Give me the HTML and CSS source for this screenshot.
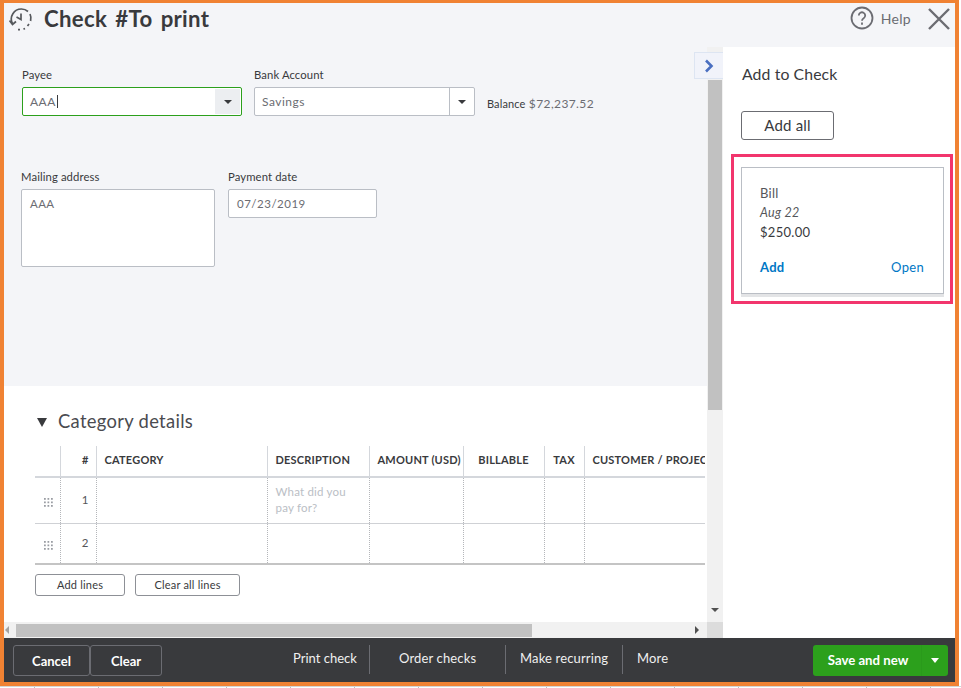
FILE: index.html
```html
<!DOCTYPE html>
<html lang="en">
<head>
<meta charset="utf-8">
<title>Check #To print</title>
<link rel="stylesheet" href="styles.css">
</head>
<body>
<div class="frame">
  <header class="header">
    <svg class="history" viewBox="0 0 24 24" width="24" height="24" fill="none" stroke="#55585c" stroke-width="1.7">
      <path d="M3.4 16.5A10 10 0 0 1 12.5 2a10 10 0 0 1 6.5 2.5"/>
      <path d="M21 7a10 10 0 0 1 .6 7M20 17l-1.5 2M16 21.5l-1.5.6M11 22.7H9"/>
      <path d="M12 6.5V12.500L7.500 10"/>
      <path d="M0.500 13.500L3.500 17.500L7 14.500"/>
    </svg>
    <h1 class="title">Check #To print</h1>
    <div class="help">
      <svg viewBox="0 0 24 24" width="24" height="24" fill="none" stroke="#6b6c72" stroke-width="1.8">
        <circle cx="12" cy="12" r="10.500"/>
        <path d="M8.800 9.500a3.200 3.200 0 1 1 4.900 2.700c-1.100.7-1.700 1.300-1.700 2.600"/>
        <path d="M12 16.600v2.200"/>
      </svg>
      <span>Help</span>
    </div>
    <svg class="close" viewBox="0 0 22 22" width="22" height="22" fill="none" stroke="#6b6c72" stroke-width="2.400">
      <path d="M1 1L21 21M21 1L1 21"/>
    </svg>
  </header>
  <main class="body">
    <section class="pane">
      <div class="content">
        <div class="form">
          <div class="row row-top">
            <div class="field">
              <label class="label">Payee</label>
              <div class="combo combo-active combo-payee">
                <span class="value">AAA<i class="caret"></i></span>
                <span class="arrow arrow-shaded"><b class="tri"></b></span>
              </div>
            </div>
            <div class="field field-bank">
              <label class="label">Bank Account</label>
              <div class="combo combo-bank">
                <span class="value">Savings</span>
                <span class="arrow arrow-line"><b class="tri"></b></span>
              </div>
            </div>
            <div class="balance"><span class="balance-label">Balance</span> $72,237.52</div>
          </div>
          <div class="row row-second">
            <div class="field">
              <label class="label">Mailing address</label>
              <div class="address">AAA</div>
            </div>
            <div class="field field-date">
              <label class="label">Payment date</label>
              <div class="date">07/23/2019</div>
            </div>
          </div>
        </div>
        <div class="details">
          <h2 class="section"><b class="section-tri"></b>Category details</h2>
          <table class="grid">
            <colgroup>
              <col class="c-drag"><col class="c-num"><col class="c-cat"><col class="c-desc"><col class="c-amt"><col class="c-bill"><col class="c-tax"><col class="c-cust">
            </colgroup>
            <thead>
              <tr>
                <th></th><th class="num">#</th><th>CATEGORY</th><th>DESCRIPTION</th><th>AMOUNT (USD)</th><th class="center">BILLABLE</th><th class="center">TAX</th><th>CUSTOMER / PROJECT</th>
              </tr>
            </thead>
            <tbody>
              <tr class="r1">
                <td class="drag"><span class="dots"></span></td><td class="num">1</td><td></td><td class="hint">What did you pay for?</td><td></td><td></td><td></td><td></td>
              </tr>
              <tr class="r2">
                <td class="drag"><span class="dots"></span></td><td class="num">2</td><td></td><td></td><td></td><td></td><td></td><td></td>
              </tr>
            </tbody>
          </table>
          <div class="table-actions">
            <button class="btn btn-lines">Add lines</button>
            <button class="btn btn-clear">Clear all lines</button>
          </div>
        </div>
      </div>
      <div class="vscroll">
        <span class="v-thumb"></span>
        <b class="v-down"></b>
      </div>
      <div class="hscroll">
        <b class="h-left"></b>
        <span class="h-thumb"></span>
        <b class="h-right"></b>
      </div>
      <div class="corner"></div>
      <button class="toggle" aria-label="Collapse">
        <svg viewBox="0 0 10 14" width="10" height="14" fill="none" stroke="#4a6fc0" stroke-width="2.600"><path d="M2 1.500L7.500 7L2 12.500"/></svg>
      </button>
    </section>
    <aside class="side">
      <h2 class="side-title">Add to Check</h2>
      <button class="btn btn-all">Add all</button>
      <div class="highlight">
        <div class="card">
          <div class="card-type">Bill</div>
          <div class="card-date">Aug 22</div>
          <div class="card-amt">$250.00</div>
          <div class="card-links"><a class="add">Add</a><a class="open">Open</a></div>
        </div>
      </div>
    </aside>
  </main>
  <footer class="footer">
    <div class="foot-left">
      <button class="dark">Cancel</button><button class="dark dark-clear">Clear</button>
    </div>
    <nav class="foot-mid">
      <a class="fl fl-print">Print check</a>
      <a class="fl fl-order">Order checks</a>
      <a class="fl fl-rec">Make recurring</a>
      <a class="fl fl-more">More</a>
    </nav>
    <div class="save">
      <span class="save-main">Save and new</span>
      <span class="save-arrow"><b class="tri tri-white"></b></span>
    </div>
  </footer>
</div>
</body>
</html>
```
FILE: styles.css
```css
* { box-sizing: border-box; }
html, body { margin: 0; padding: 0; }
body {
  width: 961px;
  height: 688px;
  overflow: hidden;
  font-family: "Lato", "Open Sans", sans-serif;
  color: #393a3d;
  background-color: #fff;
  background-image:
    linear-gradient(#d4d4d4, #d4d4d4),
    repeating-linear-gradient(90deg, transparent 0 34px, #bdbdbd 34px 35px, transparent 35px 64px);
  background-size: 100% 1px, 100% 2px;
  background-position: 0 686px, 0 686px;
  background-repeat: no-repeat;
}
button { font-family: inherit; cursor: pointer; }
h1, h2 { margin: 0; font-weight: normal; }

.frame {
  width: 959px;
  height: 686px;
  border-style: solid;
  border-color: #f08233;
  border-width: 3px 4px 4px 4px;
  display: flex;
  flex-direction: column;
  background: #f4f5f8;
}

.header {
  height: 44px;
  flex: none;
  display: flex;
  align-items: flex-start;
  padding: 5px 5px 0 5px;
}
.history { flex: none; margin-top: -1px; }
.title {
  margin: -2px 0 0 11px;
  font-size: 22.200px;
  line-height: 26px;
  font-weight: 700;
  color: #393a3d;
  letter-spacing: 0.3px;
  word-spacing: 2.500px;
}
.help {
  margin: -2px 0 0 auto;
  display: flex;
  align-items: center;
  gap: 7px;
  font-size: 14px;
  color: #6b6c72;
  letter-spacing: 0.3px;
}
.close { margin: 0 0 0 17px; flex: none; }

.body { flex: 1; min-height: 0; display: flex; }

.pane {
  position: relative;
  width: 719px;
  flex: none;
  display: grid;
  grid-template-columns: 703px 16px;
  grid-template-rows: 575px 16px;
}
.content { overflow: hidden; background: #fff; }

.form { height: 339px; background: #f4f5f8; padding: 21px 0 0 18px; }
.row { display: flex; }
.row-second { margin: 54px 0 0 -1px; }
.field { display: flex; flex-direction: column; }
.field-bank { margin-left: 12px; }
.field-date { margin-left: 13px; }
.label {
  font-size: 11.300px;
  line-height: 14px;
  color: #393a3d;
  margin-bottom: 5px;
  letter-spacing: 0.1px;
}
.combo {
  height: 29px;
  background: #fff;
  border: 1px solid #babec5;
  border-radius: 2px;
  display: flex;
  align-items: center;
  font-size: 12px;
  color: #6b6c72;
  letter-spacing: 0.5px;
}
.combo-payee { width: 220px; }
.combo-bank { width: 221px; }
.combo-active { border-color: #2ca01c; }
.value { flex: 1; padding: 0 0 1px 7px; display: flex; align-items: center; }
.caret { display: inline-block; width: 1px; height: 13px; background: #393a3d; margin-left: 1px; }
.arrow { width: 25px; height: 100%; display: flex; align-items: center; justify-content: center; }
.arrow-shaded { background: #eceef1; height: 25px; margin-right: 1px; }
.arrow-line { border-left: 1px solid #babec5; }
.tri { display: block; width: 0; height: 0; border-style: solid; border-width: 4px 4px 0 4px; border-color: #393a3d transparent transparent; }
.balance {
  margin: 28px 0 0 12px;
  font-size: 12px;
  line-height: 16px;
  color: #6b6c72;
  letter-spacing: 0.4px;
}
.balance-label { font-size: 11px; color: #393a3d; letter-spacing: 0.1px; }
.address {
  width: 194px;
  height: 78px;
  background: #fff;
  border: 1px solid #babec5;
  border-radius: 2px;
  padding: 6px 8px;
  font-size: 11.500px;
  line-height: 16px;
  color: #6b6c72;
  letter-spacing: 0.4px;
}
.date {
  width: 149px;
  height: 29px;
  background: #fff;
  border: 1px solid #babec5;
  border-radius: 2px;
  padding: 0 8px;
  font-size: 11.500px;
  line-height: 27px;
  color: #6b6c72;
  letter-spacing: 0.5px;
}

.details { width: 701px; overflow: hidden; padding: 23px 0 0 31px; background: #fff; }
.section {
  display: flex;
  align-items: center;
  font-size: 18.400px;
  line-height: 24px;
  color: #4a4b50;
  letter-spacing: 0.3px;
}
.section-tri {
  width: 0; height: 0;
  margin: 2px 11px 0 2px;
  border-style: solid;
  border-width: 9px 5px 0 5px;
  border-color: #393a3d transparent transparent;
}
.grid {
  margin-top: 13px;
  width: 750px;
  table-layout: fixed;
  border-collapse: collapse;
}
.c-drag { width: 25px; }
.c-num { width: 36px; }
.c-cat { width: 171px; }
.c-desc { width: 102px; }
.c-amt { width: 94px; }
.c-bill { width: 81px; }
.c-tax { width: 40px; }
.c-cust { width: 201px; }
.grid th {
  height: 31px;
  padding: 0 0 4px 8px;
  text-align: left;
  font-size: 11px;
  font-weight: 700;
  color: #393a3d;
  white-space: nowrap;
  overflow: hidden;
  letter-spacing: 0.2px;
  border-left: 1px solid #d4d7dc;
  border-bottom: 2px solid #d4d7dc;
}
.grid th:first-child, .grid td:first-child { border-left: 0; }
.grid th.num { text-align: right; padding-right: 7px; font-weight: 700; }
.grid th.center { text-align: center; padding-left: 0; }
.grid td {
  border-left: 1px dotted #b4b6ba;
  font-size: 11.500px;
  color: #55565a;
  padding: 0 0 1px;
}
.grid td.num { text-align: right; padding-right: 7px; }
.r1 td { height: 46px; border-bottom: 1px solid #cfd1d5; }
.r2 td { height: 41px; border-bottom: 2px solid #c4c4c4; }
.grid td.hint {
  color: #babec5;
  padding: 0 8px;
  line-height: 16px;
  letter-spacing: 0.2px;
}
.grid td.drag { text-align: center; padding-left: 3px; }
.dots {
  display: inline-block;
  width: 10px;
  height: 10px;
  margin-top: 8px;
  background-image: radial-gradient(circle at 1px 1px, #9a9da3 0.8px, transparent 0.9px);
  background-size: 3.500px 3.500px;
}
.table-actions { display: flex; gap: 10px; margin-top: 9px; }
.btn {
  height: 22px;
  background: #fff;
  border: 1px solid #8d9096;
  border-radius: 3px;
  padding: 0 0 2px;
  font-size: 11px;
  color: #393a3d;
  letter-spacing: 0.2px;
}
.btn-lines { width: 90px; }
.btn-clear { width: 105px; }

.vscroll { position: relative; background: #f1f1f1; }
.v-thumb { position: absolute; left: 1px; top: 33px; width: 14px; height: 330px; background: #c1c1c1; }
.v-down {
  position: absolute; left: 4px; top: 561px;
  width: 0; height: 0; border-style: solid;
  border-width: 4px 4px 0 4px;
  border-color: #505050 transparent transparent;
}
.hscroll { position: relative; background: #f1f1f1; }
.h-thumb { position: absolute; left: 12px; top: 2px; width: 516px; height: 13px; background: #c1c1c1; }
.h-left, .h-right {
  position: absolute; top: 4px;
  width: 0; height: 0; border-style: solid;
}
.h-left { left: 1px; border-width: 4px 4px 4px 0; border-color: transparent #a3a3a3 transparent transparent; }
.h-right { right: 8px; border-width: 4px 0 4px 4px; border-color: transparent transparent transparent #505050; }
.corner { background: #dcdcdc; }
.toggle {
  position: absolute;
  left: 690px;
  top: 5px;
  width: 29px;
  height: 27px;
  padding: 0;
  background: #f1f3fa;
  border: 1px solid #dde5f2;
  border-right: 0;
  display: flex;
  align-items: center;
  justify-content: center;
}

.side { flex: 1; background: #fff; display: flex; flex-direction: column; align-items: flex-start; padding: 16px 0 0 8px; }
.side-title { margin-left: 11px; font-size: 15.800px; line-height: 22px; color: #393a3d; letter-spacing: 0.1px; }
.btn-all {
  margin: 26px 0 0 10px;
  width: 93px;
  height: 29px;
  font-size: 15px;
  border-color: #6b6c72;
}
.highlight {
  margin-top: 14px;
  width: 222px;
  height: 150px;
  border: 3px solid #f2356d;
  padding: 10px 6px 0 7px;
}
.card {
  width: 203px;
  height: 127px;
  background: #fff;
  border: 1px solid #babec5;
  box-shadow: 0 3px 0 #e3e4e6;
  padding: 15px 19px 0 18px;
  font-size: 13px;
  line-height: 20px;
  color: #393a3d;
  letter-spacing: 0.3px;
}
.card-type { color: #55565a; }
.card-date { font-style: italic; font-size: 12.500px; color: #55565a; }
.card-amt { margin-top: -1px; }
.card-links { display: flex; justify-content: space-between; margin-top: 15px; }
.add { color: #0077c5; font-weight: 700; }
.open { color: #0077c5; font-size: 13px; }

.footer {
  height: 44px;
  flex: none;
  background: #393a3d;
  display: flex;
  align-items: flex-start;
  padding: 7px 7px 0 9px;
  position: relative;
}
.foot-left { display: flex; flex: none; width: 149px; }
.dark {
  width: 77px;
  height: 31px;
  background: transparent;
  border: 1px solid #6b6c72;
  border-radius: 3px;
  padding: 0;
  color: #fff;
  font-size: 13px;
  font-weight: 700;
}
.dark-clear { width: 72px; margin-left: 0; }
.foot-mid { flex: 1; display: flex; padding-left: 119px; color: #eee; }
.fl {
  height: 29px;
  font-size: 13px;
  line-height: 27px;
  color: #f0f0f0;
  letter-spacing: 0.15px;
  white-space: nowrap;
}
.fl-print { width: 89px; padding-left: 12px; letter-spacing: 0; border-right: 1px solid #6b6c72; }
.fl-order { width: 136px; padding-left: 29px; border-right: 1px solid #6b6c72; }
.fl-rec { width: 117px; padding-left: 14px; border-right: 1px solid #6b6c72; }
.fl-more { padding-left: 14px; }
.save {
  width: 135px;
  height: 31px;
  flex: none;
  background: #2ca01c;
  border-radius: 3px;
  display: flex;
  color: #fff;
  font-size: 13.200px;
  font-weight: 700;
}
.save-main { width: 109px; text-align: center; line-height: 31px; border-right: 1px solid #2a9a1b; padding-left: 2px; }
.save-arrow { flex: 1; display: flex; align-items: center; justify-content: center; }
.tri-white { border-width: 5px 4.500px 0 4.500px; border-color: #fff transparent transparent; }
```
